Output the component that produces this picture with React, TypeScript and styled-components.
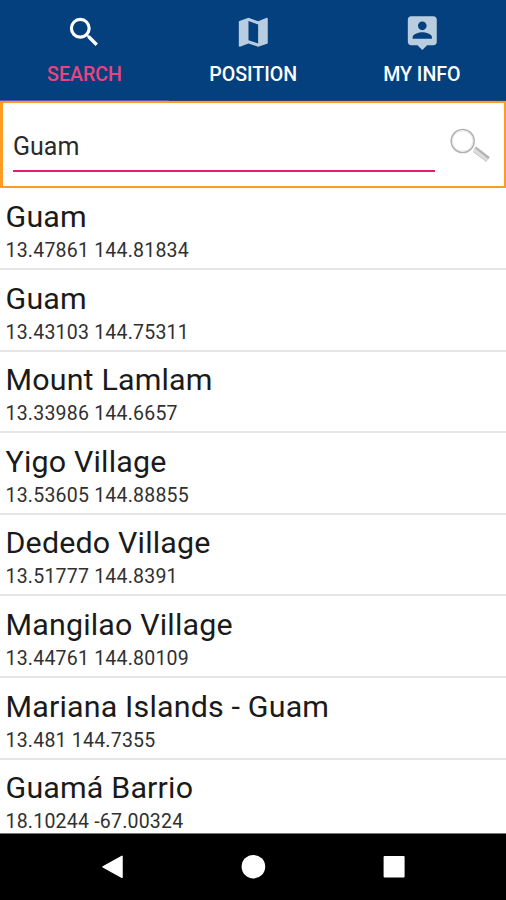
import React from "react";
import styled, { createGlobalStyle } from "styled-components";

const GlobalStyle = createGlobalStyle`
  * { box-sizing: border-box; }
  body { margin: 0; background: #fff; font-family: Roboto, sans-serif; }
`;

const Screen = styled.main`
  width: 506px;
  height: 900px;
  display: flex;
  flex-direction: column;
  overflow: hidden;
  background: #fff;
`;

const TabBar = styled.nav`
  flex: none;
  height: 101px;
  display: grid;
  grid-template-columns: repeat(3, 1fr);
  background: #043f7e;
`;

const Tab = styled.div<{ $active?: boolean }>`
  display: flex;
  flex-direction: column;
  align-items: center;
  padding: 13px 0 0 0.4px;
  border-bottom: 1px solid ${(p) => (p.$active ? "#5c51b4" : "#2b4368")};
  color: ${(p) => (p.$active ? "#e8457f" : "#fff")};
  font-size: 19.6px;
  font-weight: 500;
  line-height: 24px;

  svg {
    width: 38.6px;
    height: 38.6px;
    margin-bottom: 11.4px;
    fill: ${(p) => (p.$active ? "#fff" : "#b9cde0")};
  }
`;

const SearchBar = styled.section`
  flex: none;
  height: 87.4px;
  display: flex;
  border: 2px solid #fb9d22;
  border-left-width: 3px;
  padding: 25px 8px 0 10px;
`;

const Field = styled.div`
  flex: none;
  width: 422px;
  height: 43.5px;
  border-bottom: 2px solid #e0206a;
  color: #2a2a2a;
  font-size: 25px;
  line-height: 38px;
`;

const SearchButton = styled.div`
  flex: none;
  margin: -2px 0 0 13px;
  width: 46px;
  height: 42px;
`;

const Results = styled.ul`
  flex: 1;
  min-height: 0;
  margin: 0;
  padding: 0;
  overflow: hidden;
  list-style: none;
`;

const Result = styled.li`
  height: 81.6px;
  padding: 9.7px 6px 0 5.5px;
  border-bottom: 2px solid #e6e6e6;
`;

const Name = styled.div`
  color: #1a1a1a;
  font-size: 30.4px;
  line-height: 38px;
  letter-spacing: 0.18px;
  white-space: nowrap;
`;

const Coordinates = styled.div`
  color: #303030;
  font-size: 19.5px;
  line-height: 29px;
  letter-spacing: 0.22px;
  white-space: nowrap;
`;

const SystemBar = styled.footer`
  flex: none;
  height: 67px;
  display: grid;
  grid-template-columns: repeat(3, 140.5px);
  justify-content: center;
  justify-items: center;
  background: #000;
  border-top: 1px solid #777;

  svg {
    width: 28px;
    height: 66px;
    fill: #fff;
  }
`;

const places = [
  ["Guam", "13.47861 144.81834"],
  ["Guam", "13.43103 144.75311"],
  ["Mount Lamlam", "13.33986 144.6657"],
  ["Yigo Village", "13.53605 144.88855"],
  ["Dededo Village", "13.51777 144.8391"],
  ["Mangilao Village", "13.44761 144.80109"],
  ["Mariana Islands - Guam", "13.481 144.7355"],
  ["Guamá Barrio", "18.10244 -67.00324"],
];

const Magnifier = () => (
  <svg width="46" height="42" viewBox="0 0 46 42">
    <path d="M25.5 23L28 20.5L42 31.5L38.5 36L25 26Z" fill="#dedede" />
    <path d="M28 20.5L41.7 31L40 33L27 22.5Z" fill="#b5b5b5" />
    <path d="M25 25.5L38.5 35.5" stroke="#c7c7c7" fill="none" />
    <circle cx="14.7" cy="15" r="11.5" fill="#fff" stroke="#b2b2b2" strokeWidth="1.6" />
    <circle cx="14.7" cy="15" r="10.2" fill="none" stroke="#e6e6e6" strokeWidth="1" />
  </svg>
);

export default function App() {
  return (
    <Screen>
      <GlobalStyle />
      <TabBar>
        <Tab $active>
          <svg viewBox="0 0 24 24">
            <path d="M15.5 14h-.79l-.28-.27A6.471 6.471 0 0 0 16 9.5 6.5 6.5 0 1 0 9.5 16c1.61 0 3.09-.59 4.23-1.57l.27.28v.79l5 4.99L20.49 19l-4.99-5zm-6 0C7.01 14 5 11.99 5 9.5S7.01 5 9.5 5 14 7.01 14 9.5 11.99 14 9.5 14z" />
          </svg>
          SEARCH
        </Tab>
        <Tab>
          <svg viewBox="0 0 24 24">
            <path d="M20.5 3l-.16.03L15 5.1 9 3 3.36 4.9c-.21.07-.36.25-.36.48V20.5c0 .28.22.5.5.5l.16-.03L9 18.9l6 2.1 5.64-1.9c.21-.07.36-.25.36-.48V3.5c0-.28-.22-.5-.5-.5zM15 19l-6-2.11V5l6 2.11V19z" />
          </svg>
          POSITION
        </Tab>
        <Tab>
          <svg viewBox="0 0 24 24">
            <path d="M19 2H5c-1.1 0-2 .9-2 2v14c0 1.1.9 2 2 2h4l3 3 3-3h4c1.1 0 2-.9 2-2V4c0-1.1-.9-2-2-2zm-7 3.3c1.49 0 2.7 1.21 2.7 2.7s-1.21 2.7-2.7 2.7S9.3 9.49 9.3 8s1.21-2.7 2.7-2.7zM18 16H6v-.9c0-2 4-3.1 6-3.1s6 1.1 6 3.1v.9z" />
          </svg>
          MY INFO
        </Tab>
      </TabBar>
      <SearchBar>
        <Field>Guam</Field>
        <SearchButton>
          <Magnifier />
        </SearchButton>
      </SearchBar>
      <Results>
        {places.map(([name, coordinates]) => (
          <Result key={coordinates}>
            <Name>{name}</Name>
            <Coordinates>{coordinates}</Coordinates>
          </Result>
        ))}
      </Results>
      <SystemBar>
        <svg viewBox="0 0 28 66">
          <path d="M4 32.8L23 22.3V43.3Z" stroke="#fff" strokeWidth="1.5" strokeLinejoin="round" />
        </svg>
        <svg viewBox="0 0 28 66">
          <circle cx="14.4" cy="32.7" r="11.8" />
        </svg>
        <svg viewBox="0 0 28 66">
          <rect x="3.6" y="22" width="21" height="21.5" rx="1" />
        </svg>
      </SystemBar>
    </Screen>
  );
}
